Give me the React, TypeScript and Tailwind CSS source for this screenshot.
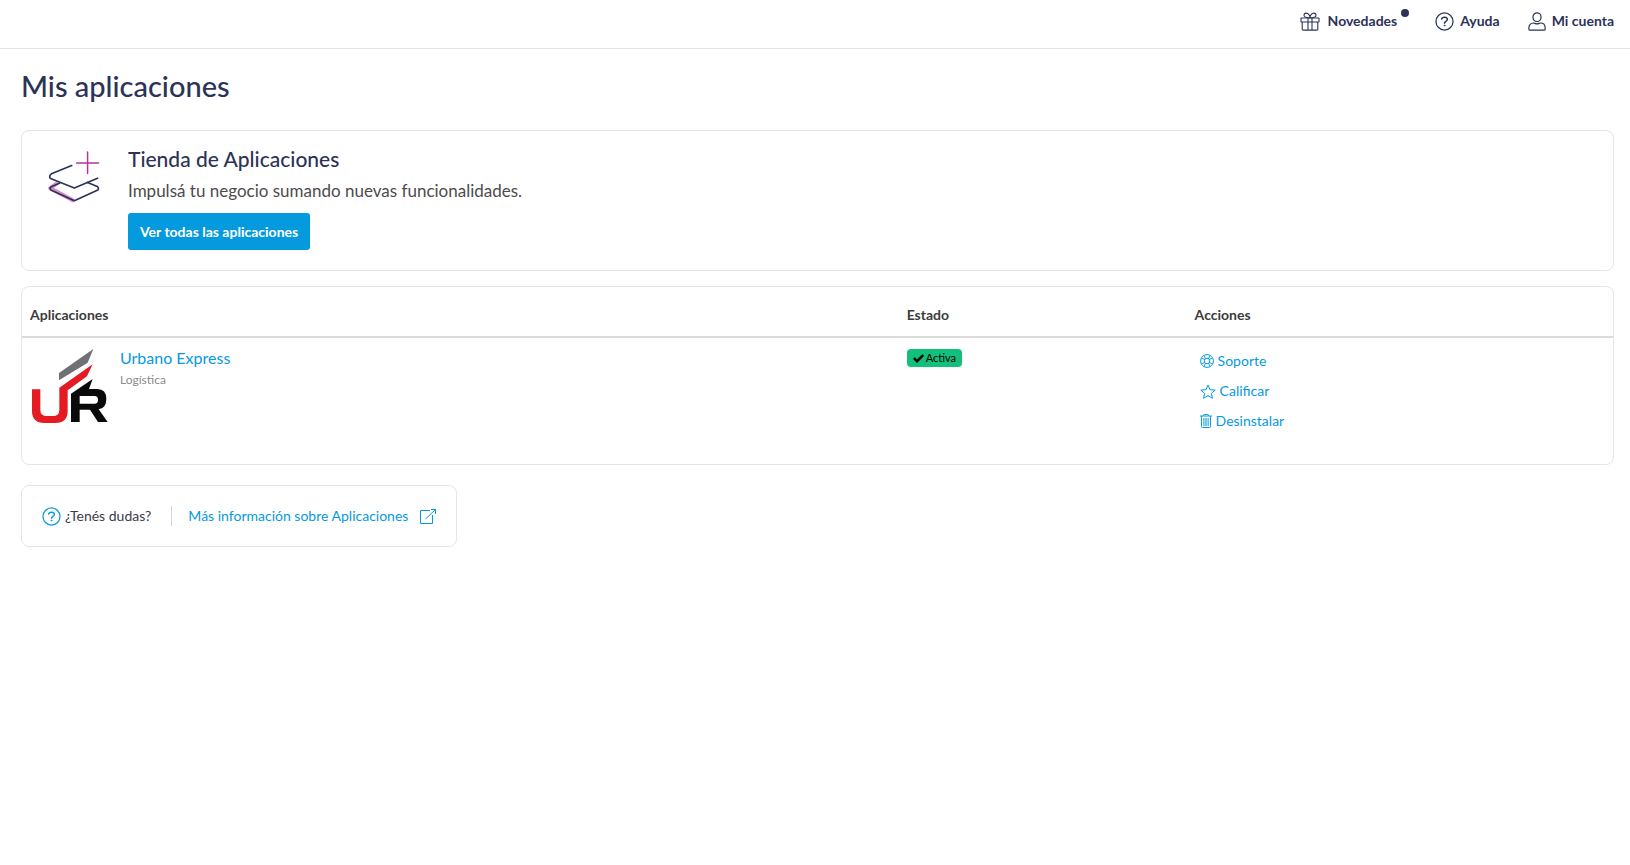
import type { ReactNode } from "react";

type IconProps = { className?: string };

function GiftIcon({ className }: IconProps) {
  return (
    <svg viewBox="0 0 20 19" fill="none" stroke="currentColor" strokeWidth="1.1" strokeLinejoin="round" className={className} aria-hidden="true">
      <rect x="1" y="6" width="18" height="4" rx="0.5" />
      <path d="M2.2 10v7.2a.9.9 0 0 0 .9.9h13.8a.9.9 0 0 0 .9-.9V10M8 6v12M12 6v12" />
      <path d="M10 5.8C7.5 5.8 4 5.4 4 3.2 4 1.9 5 1.1 6.2 1.1 8.4 1.1 10 3.6 10 5.8ZM10 5.8c2.5 0 6-.4 6-2.6 0-1.3-1-2.1-2.2-2.1C11.6 1.1 10 3.6 10 5.8Z" />
    </svg>
  );
}

function QuestionIcon({ className }: IconProps) {
  return (
    <svg viewBox="0 0 20 20" fill="none" stroke="currentColor" strokeWidth="1.3" strokeLinecap="round" className={className} aria-hidden="true">
      <circle cx="10" cy="10" r="9" />
      <path d="M7 7.5C7.2 6.2 8.4 5.5 10 5.5c1.8 0 3 .9 3 2.3 0 2.1-3 2-3 4" strokeWidth="1.5" />
      <circle cx="10" cy="14.3" r="0.5" fill="currentColor" strokeWidth="0.8" />
    </svg>
  );
}

function UserIcon({ className }: IconProps) {
  return (
    <svg viewBox="0 0 18 19" fill="none" stroke="currentColor" strokeWidth="1.2" strokeLinejoin="round" className={className} aria-hidden="true">
      <rect x="5" y="0.8" width="8" height="8.7" rx="4" />
      <path d="M5.5 11c-3 0-4.600 2-4.600 4.600v1.600c0 .6.3.9.9.9h14.400c.6 0 .9-.3.9-.9v-1.600c0-2.600-1.600-4.600-4.600-4.600-1 0-1.800.8-3.500.8S6.500 11 5.500 11Z" />
    </svg>
  );
}

function LayersIcon({ className }: IconProps) {
  return (
    <svg viewBox="0 0 156 160" fill="none" strokeLinecap="round" strokeLinejoin="round" className={className} aria-hidden="true">
      <path d="M24 99 L6 112 L74 149" stroke="#d78fca" strokeWidth="12" />
      <path d="M119 3V68M86 36H152" stroke="#b5369b" strokeWidth="4.5" />
      <path d="M71 44 L10 69Q2 74 6 82L9 84L79 112L149 82" stroke="#2c3357" strokeWidth="5" />
      <path d="M34 97L8 109Q4 113 8 118L79 150L150 118Q154 112 148 107L119 95" stroke="#2c3357" strokeWidth="5" />
    </svg>
  );
}

function UrbanoLogo({ className }: IconProps) {
  return (
    <svg viewBox="0 0 240 234" className={className} role="img" aria-label="Urbano Express">
      <path d="M87 100V78L190 6L173 47Z" fill="#707174" />
      <path d="M6 127H31V188Q31 207 51 207H69Q88 207 88 188V122L188 52L171 88L113 130V192Q113 228 76 228H43Q6 228 6 192Z" fill="#e51b24" />
      <path d="M123 140L188 96L177 126H202Q229 126 229 156Q229 184 206 187L233 225H204L180 188H149V225H123ZM149 147V170H194Q204 170 204 158Q204 147 194 147Z" fill="#0a0a0a" fillRule="evenodd" />
    </svg>
  );
}

function CheckIcon({ className }: IconProps) {
  return (
    <svg viewBox="0 0 11 9" fill="none" stroke="currentColor" strokeWidth="2.4" className={className} aria-hidden="true">
      <path d="M0.9 4.2 4 7.2 10.2 1" />
    </svg>
  );
}

function LifebuoyIcon() {
  return (
    <svg viewBox="0 0 14 14" fill="none" stroke="currentColor" className="h-3.5 w-3.5" aria-hidden="true">
      <circle cx="7" cy="7" r="6.4" />
      <circle cx="7" cy="7" r="2.8" />
      <path d="M4.200 1.300 5.300 4.600M1.300 4.200l3.300 1.100M9.800 1.300 8.700 4.600M12.700 4.200 9.400 5.300M4.200 12.700l1.100-3.300M1.300 9.800l3.300-1.100M9.800 12.700 8.700 9.400M12.700 9.800 9.400 8.700" strokeWidth="0.9" />
    </svg>
  );
}

function StarIcon() {
  return (
    <svg viewBox="0 0 16 15" fill="none" stroke="currentColor" strokeLinejoin="round" className="h-[15px] w-4" aria-hidden="true">
      <path d="M8 1 10 5.7 15.2 6.1 11.3 9.5 12.5 14.3 8 11.7 3.5 14.3 4.7 9.5 0.8 6.1 6 5.7Z" />
    </svg>
  );
}

function TrashIcon() {
  return (
    <svg viewBox="0 0 12 14" fill="none" stroke="currentColor" className="h-3.5 w-3" aria-hidden="true">
      <path d="M0 2H12M3.500 2V1.300Q3.500 .5 4.300 .5H7.700Q8.500 .5 8.500 1.300V2M1.500 2V12.500Q1.500 13.500 2.500 13.500H9.500Q10.500 13.500 10.500 12.500V2" />
      <path d="M3.700 4V12M5.200 4V12M6.800 4V12M8.300 4V12" strokeWidth="0.8" />
    </svg>
  );
}

function ExternalIcon() {
  return (
    <svg viewBox="0 0 16 15" fill="none" stroke="currentColor" className="h-[15px] w-4" aria-hidden="true">
      <path d="M10 1.500H.5V14.500H12.500V6M5.500 10 15.400.6M11 .5H15.500V5" />
    </svg>
  );
}

function ActionLink({ icon, children }: { icon: ReactNode; children: ReactNode }) {
  return (
    <a href="#" className="flex h-[30px] w-fit items-center gap-1 text-sm text-[#059ade]">
      {icon}
      {children}
    </a>
  );
}

export default function App() {
  return (
    <div className="font-[Lato,'Open_Sans',sans-serif] text-[#2c3357]">
      <header className="flex h-[49px] items-center border-b border-[#e5e5e5] px-4 pb-1.5">
        <nav className="ml-auto flex items-center gap-7 text-sm font-bold">
          <a href="#" className="relative mr-2.5 flex items-center gap-2">
            <GiftIcon className="h-[19px] w-5" />
            Novedades
            <span className="absolute -right-3 -top-0.5 h-2 w-2 rounded-full bg-[#2c3357]" />
          </a>
          <a href="#" className="flex items-center gap-1.5">
            <QuestionIcon className="h-[19px] w-[19px]" />
            Ayuda
          </a>
          <a href="#" className="flex items-center gap-1.5">
            <UserIcon className="h-[19px] w-[18px]" />
            Mi cuenta
          </a>
        </nav>
      </header>

      <main className="px-4 pl-[21px]">
        <h1 className="pb-[26px] pt-[19px] text-[29px] font-medium leading-9">Mis aplicaciones</h1>

        <section className="flex gap-7 rounded-lg border border-[#e5e5e5] px-[26px] pb-5 pt-4">
          <LayersIcon className="mt-1 h-[53px] w-[52px] shrink-0" />
          <div>
            <h2 className="text-[21px] font-medium leading-6">Tienda de Aplicaciones</h2>
            <p className="mt-2 text-[17px] leading-6 text-[#4f4a4c]">Impulsá tu negocio sumando nuevas funcionalidades.</p>
            <button type="button" className="mt-2.5 h-[37px] rounded-[3px] bg-[#059ade] px-3 text-sm font-bold text-white">
              Ver todas las aplicaciones
            </button>
          </div>
        </section>

        <section className="mt-[15px] rounded-lg border border-[#e5e5e5]">
          <table className="w-full table-fixed text-left">
            <thead className="border-b-2 border-[#dcdcdc] text-sm text-[#3c3c3c]">
              <tr className="h-[50px]">
                <th className="w-[55.1%] px-2 pt-1.5 font-bold">Aplicaciones</th>
                <th className="w-[18.1%] px-2 pt-1.5 font-bold">Estado</th>
                <th className="px-2 pt-1.5 font-bold">Acciones</th>
              </tr>
            </thead>
            <tbody className="align-top">
              <tr>
                <td className="px-2 py-[9px]">
                  <div className="flex gap-2.5">
                    <UrbanoLogo className="h-[78px] w-20" />
                    <div>
                      <a href="#" className="block text-base leading-[22px] text-[#059ade]">Urbano Express</a>
                      <p className="mt-[3px] text-xs leading-4 text-[#8a8a8a]">Logística</p>
                    </div>
                  </div>
                </td>
                <td className="px-2 py-[11px]">
                  <span className="flex h-[18px] w-fit items-center gap-0.5 rounded-sm bg-[#10c07b] px-1.5 text-[11px] text-black">
                    <CheckIcon className="h-[9px] w-[11px]" />
                    Activa
                  </span>
                </td>
                <td className="px-[13px] pb-7 pt-2">
                  <ActionLink icon={<LifebuoyIcon />}>Soporte</ActionLink>
                  <ActionLink icon={<StarIcon />}>Calificar</ActionLink>
                  <ActionLink icon={<TrashIcon />}>Desinstalar</ActionLink>
                </td>
              </tr>
            </tbody>
          </table>
        </section>

        <section className="mt-5 flex h-[62px] w-fit items-center rounded-lg border border-[#e5e5e5] px-5 text-sm">
          <QuestionIcon className="h-[19px] w-[19px] text-[#059ade]" />
          <span className="ml-1 border-r border-[#d8d8d8] pr-5 text-[#3e3a4a]">¿Tenés dudas?</span>
          <a href="#" className="ml-4 flex items-center gap-3 text-[#059ade]">
            Más información sobre Aplicaciones
            <ExternalIcon />
          </a>
        </section>
      </main>
    </div>
  );
}
